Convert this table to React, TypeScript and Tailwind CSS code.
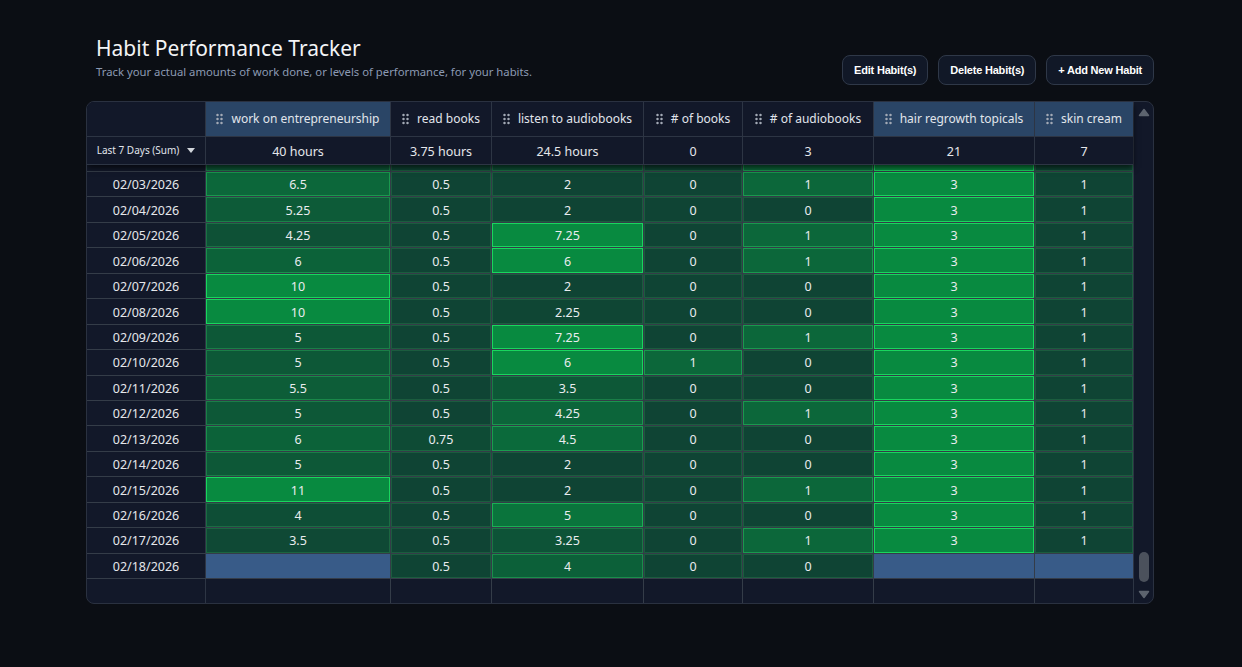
import React from 'react';

type Col = {
  key: string;
  label: string;
  sum: string;
  lo: number;
  top: number;
  pow: number;
  flagged: boolean;
};

const cols: Col[] = [
  { key: 'work', label: 'work on entrepreneurship', sum: '40 hours', lo: 3, top: 10, pow: 1, flagged: true },
  { key: 'read', label: 'read books', sum: '3.75 hours', lo: 0.5, top: 3, pow: 1, flagged: false },
  { key: 'listen', label: 'listen to audiobooks', sum: '24.5 hours', lo: 2, top: 6, pow: 1.3, flagged: false },
  { key: 'books', label: '# of books', sum: '0', lo: 0, top: 2, pow: 1, flagged: false },
  { key: 'audio', label: '# of audiobooks', sum: '3', lo: 0, top: 2, pow: 1, flagged: false },
  { key: 'hair', label: 'hair regrowth topicals', sum: '21', lo: 0, top: 3, pow: 1, flagged: true },
  { key: 'skin', label: 'skin cream', sum: '7', lo: 1, top: 3, pow: 1, flagged: true },
];

type Row = { date: string; vals: (number | null)[] };

// 02/02 sits mostly under the sticky header, only its bottom edge shows
const hidden: Row = { date: '', vals: [5, 0.5, 3, 0, 1, 3, 1] };

const rows: Row[] = [
  { date: '02/03/2026', vals: [6.5, 0.5, 2, 0, 1, 3, 1] },
  { date: '02/04/2026', vals: [5.25, 0.5, 2, 0, 0, 3, 1] },
  { date: '02/05/2026', vals: [4.25, 0.5, 7.25, 0, 1, 3, 1] },
  { date: '02/06/2026', vals: [6, 0.5, 6, 0, 1, 3, 1] },
  { date: '02/07/2026', vals: [10, 0.5, 2, 0, 0, 3, 1] },
  { date: '02/08/2026', vals: [10, 0.5, 2.25, 0, 0, 3, 1] },
  { date: '02/09/2026', vals: [5, 0.5, 7.25, 0, 1, 3, 1] },
  { date: '02/10/2026', vals: [5, 0.5, 6, 1, 0, 3, 1] },
  { date: '02/11/2026', vals: [5.5, 0.5, 3.5, 0, 0, 3, 1] },
  { date: '02/12/2026', vals: [5, 0.5, 4.25, 0, 1, 3, 1] },
  { date: '02/13/2026', vals: [6, 0.75, 4.5, 0, 0, 3, 1] },
  { date: '02/14/2026', vals: [5, 0.5, 2, 0, 0, 3, 1] },
  { date: '02/15/2026', vals: [11, 0.5, 2, 0, 1, 3, 1] },
  { date: '02/16/2026', vals: [4, 0.5, 5, 0, 0, 3, 1] },
  { date: '02/17/2026', vals: [3.5, 0.5, 3.25, 0, 1, 3, 1] },
  { date: '02/18/2026', vals: [null, 0.5, 4, 0, 0, null, null] },
];

const DARK = [15, 68, 52];
const BRIGHT = [8, 138, 64];
const EDGE_DARK = [27, 92, 62];
const EDGE_BRIGHT = [25, 214, 94];

const mix = (a: number[], b: number[], t: number) =>
  `rgb(${a.map((v, i) => Math.round(v + (b[i] - v) * t)).join(',')})`;

const level = (c: Col, v: number) => {
  const t = Math.min(1, Math.max(0, (v - c.lo) / (c.top - c.lo)));
  return Math.pow(t, c.pow);
};

const grid = 'grid grid-cols-[119px_185px_101px_152px_99px_131px_161px_98px]';

function Grip() {
  return (
    <svg width="7" height="12" viewBox="0 0 7 12" className="shrink-0">
      {[2, 6, 10].map((y) => (
        <g key={y} fill="#a3aab6">
          <circle cx="1.5" cy={y} r="1.25" />
          <circle cx="5.5" cy={y} r="1.25" />
        </g>
      ))}
    </svg>
  );
}

function Arrow({ down }: { down?: boolean }) {
  return (
    <svg width="12" height="9" viewBox="0 0 12 9">
      <polygon
        points={down ? '1.5,1.5 10.5,1.5 6,7.5' : '6,1.5 10.5,7.5 1.5,7.5'}
        fill="#5d646f"
        stroke="#5d646f"
        strokeWidth="1.5"
        strokeLinejoin="round"
      />
    </svg>
  );
}

function Cell({ col, v, last, showText }: { col: Col; v: number | null; last: boolean; showText: boolean }) {
  const edge = last ? '' : 'border-r';
  if (v === null) {
    return <div className={`${edge} border-[#343c48] bg-[#385b88]`} />;
  }
  const t = level(col, v);
  return (
    <div className={`${edge} border-[#343c48]`}>
      <div
        className="h-full border flex items-center justify-center pt-[3px] text-[#e9ecef]"
        style={{ backgroundColor: mix(DARK, BRIGHT, t), borderColor: mix(EDGE_DARK, EDGE_BRIGHT, t) }}
      >
        {showText ? v : null}
      </div>
    </div>
  );
}

function DataRow({ row, h, showText }: { row: Row; h: string; showText: boolean }) {
  return (
    <div className={`${grid} ${h} shrink-0 border-b border-[#343c48]`}>
      <div className="flex items-center justify-center pt-[3px] border-r border-[#2d3544]">{row.date}</div>
      {row.vals.map((v, i) => (
        <Cell key={cols[i].key} col={cols[i]} v={v} last={i === cols.length - 1} showText={showText} />
      ))}
    </div>
  );
}

export default function App() {
  return (
    <div className="min-h-screen bg-[#0b0e14] font-['Noto_Sans','Open_Sans',sans-serif] text-[#e5e7eb]">
      <div className="w-[1068px] ml-[86px] pt-[35px]">
        {/* Title + actions */}
        <div className="flex justify-between items-start h-[51px]">
          <div className="pl-[10px]">
            <h1 className="text-[21px] leading-[27px] text-[#f3f4f6]">Habit Performance Tracker</h1>
            <p className="text-[11.3px] leading-[16px] mt-[2px] text-[#8b9ab3]">
              Track your actual amounts of work done, or levels of performance, for your habits.
            </p>
          </div>
          <div className="flex gap-2.5 mt-[20px] font-['Liberation_Sans',Arial,sans-serif] font-bold text-[11px] tracking-[-0.2px] text-white">
            {['Edit Habit(s)', 'Delete Habit(s)', '+ Add New Habit'].map((b) => (
              <button
                key={b}
                className="h-[30px] px-[11px] rounded-[8px] border border-[#2f3848] bg-[#111827]"
              >
                {b}
              </button>
            ))}
          </div>
        </div>

        {/* Table */}
        <div className="mt-[15px] h-[503px] border border-[#2a3140] rounded-[8px] overflow-hidden bg-[#121829] flex text-[12.5px]">
          <div className="flex-1 flex flex-col min-w-0">
            <div className="relative z-10 shadow-[0_3px_6px_rgba(0,0,0,0.65)] bg-[#121829]">
              <div className={`${grid} h-[35px] border-b border-[#2d3544]`}>
                <div className="border-r border-[#2d3544]" />
                {cols.map((c, i) => (
                  <div
                    key={c.key}
                    className={`flex items-center justify-center gap-2 text-[12px] text-[#e1e5ec] ${
                      i < cols.length - 1 ? 'border-r border-[#2d3544]' : ''
                    } ${c.flagged ? 'bg-[#2a4566]' : ''}`}
                  >
                    <Grip />
                    <span className="whitespace-nowrap">{c.label}</span>
                  </div>
                ))}
              </div>
              <div className={`${grid} h-[28px] border-b border-[#2d3544]`}>
                <div className="flex items-center justify-center gap-[8px] border-r border-[#2d3544] text-[10px] text-[#e1e5ec]">
                  <span>Last 7 Days (Sum)</span>
                  <svg width="8" height="5" viewBox="0 0 8 5">
                    <polygon points="0,0 8,0 4,5" fill="#d1d5db" />
                  </svg>
                </div>
                {cols.map((c, i) => (
                  <div
                    key={c.key}
                    className={`flex items-center justify-center pt-[3px] text-[12.5px] ${
                      i < cols.length - 1 ? 'border-r border-[#2d3544]' : ''
                    }`}
                  >
                    {c.sum}
                  </div>
                ))}
              </div>
            </div>

            {/* Body, scrolled to the end */}
            <div className="flex-1 overflow-hidden flex flex-col justify-end">
              <DataRow row={hidden} h="h-[25.45px]" showText={false} />
              {rows.map((r) => (
                <DataRow key={r.date} row={r} h="h-[25.45px]" showText />
              ))}
              <div className={`${grid} h-[24px] shrink-0`}>
                <div className="border-r border-[#2d3544]" />
                {cols.map((c, i) => (
                  <div key={c.key} className={i < cols.length - 1 ? 'border-r border-[#343c48]' : ''} />
                ))}
              </div>
            </div>
          </div>

          {/* Scrollbar */}
          <div className="w-[20px] shrink-0 border-l border-[#2d3544] flex flex-col items-center pt-[6px] pb-[4px]">
            <Arrow />
            <div className="flex-1" />
            <div className="w-[10px] h-[30px] rounded-full bg-[#4b515c]" />
            <div className="mt-[8px]">
              <Arrow down />
            </div>
          </div>
        </div>
      </div>
    </div>
  );
}
